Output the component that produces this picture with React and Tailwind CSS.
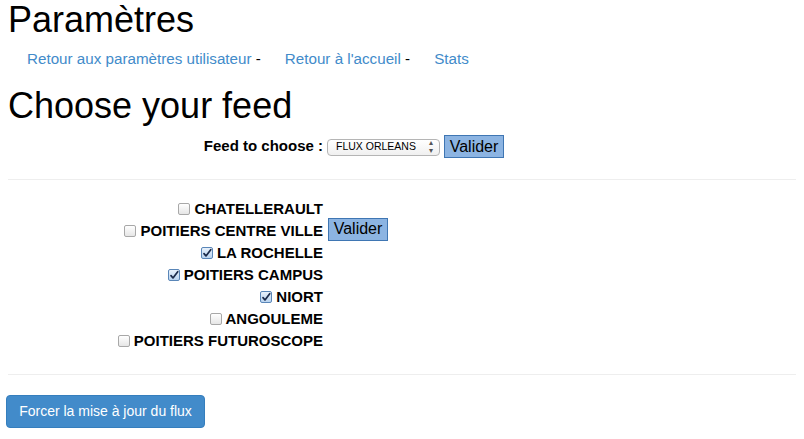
import React, { useState } from "react";

const feeds = [
  { name: "CHATELLERAULT", checked: false },
  { name: "POITIERS CENTRE VILLE", checked: false },
  { name: "LA ROCHELLE", checked: true },
  { name: "POITIERS CAMPUS", checked: true },
  { name: "NIORT", checked: true },
  { name: "ANGOULEME", checked: false },
  { name: "POITIERS FUTUROSCOPE", checked: false },
];

function Box({ checked, onClick }) {
  // small mac-style checkbox
  return (
    <span
      onClick={onClick}
      className={`inline-flex items-center justify-center w-[12px] h-[12px] rounded-[2px] border mr-[4px] ${
        checked
          ? "border-[#5a86b8] bg-gradient-to-b from-[#e8f1fb] to-[#b9d3ef]"
          : "border-[#a8a8a8] bg-gradient-to-b from-white to-[#e6e6e6]"
      }`}
    >
      {checked && (
        <svg viewBox="0 0 11 11" className="w-[11px] h-[11px]">
          <path
            d="M2.2 5.6 L4.4 8.2 L9.6 1.4"
            fill="none"
            stroke="#1b2a4a"
            strokeWidth="1.9"
            strokeLinecap="round"
            strokeLinejoin="round"
          />
        </svg>
      )}
    </span>
  );
}

export default function App() {
  const [list, setList] = useState(feeds);

  const toggle = (i) => {
    setList(list.map((f, j) => (j === i ? { ...f, checked: !f.checked } : f)));
  };

  return (
    <div className="bg-white text-black px-2 min-h-[439px] font-['Liberation_Sans',Arial,sans-serif]">
      <h1 className="text-[36px] leading-[40px]">Paramètres</h1>

      {/* top links */}
      <div className="mt-[9px] flex items-center pl-[19px] text-[15.2px] leading-[20px] whitespace-pre">
        <a href="#" className="text-[#428bca]">
          Retour aux paramètres utilisateur
        </a>
        <span>{" -"}</span>
        <a href="#" className="text-[#428bca] ml-[24px]">
          Retour à l'accueil
        </a>
        <span>{" -"}</span>
        <a href="#" className="text-[#428bca] ml-[24px]">
          Stats
        </a>
      </div>

      <h2 className="mt-[17px] text-[36px] leading-[40px]">Choose your feed</h2>

      {/* feed select */}
      <div className="mt-[9px] flex items-center h-[23px]">
        <label className="w-[315px] text-right font-bold text-[15px] leading-[18px] -mt-[2px]">
          Feed to choose :
        </label>
        <div className="ml-[4px] mt-[1px] w-[113px] h-[17px] rounded-[4px] border border-[#b5b5b5] bg-gradient-to-b from-white to-[#f0f0f0] flex items-center justify-between pl-[8px] pr-[6px] text-[10.5px]">
          <span>FLUX ORLEANS</span>
          <span className="text-[8px] leading-[8px] text-[#555] flex flex-col items-center">
            <span>▴</span>
            <span>▾</span>
          </span>
        </div>
        <button className="ml-[4px] h-[23px] w-[60px] bg-[#8cb4e2] border border-[#3f76b3] text-[16px] leading-[20px]">
          Valider
        </button>
      </div>

      <hr className="mt-[21px] border-0 border-t border-[#eeeeee]" />

      {/* feed list */}
      <div className="mt-[18px] flex">
        <div className="w-[315px] flex flex-col items-end">
          {list.map((f, i) => (
            <div
              key={f.name}
              className="h-[22px] flex items-center font-bold text-[15px]"
            >
              <Box checked={f.checked} onClick={() => toggle(i)} />
              <span>{f.name}</span>
            </div>
          ))}
        </div>
        <div className="ml-[5px] mt-[19px]">
          <button className="h-[23px] w-[60px] bg-[#8cb4e2] border border-[#3f76b3] text-[16px] leading-[20px]">
            Valider
          </button>
        </div>
      </div>

      <hr className="mt-[22px] border-0 border-t border-[#eeeeee]" />

      <button className="mt-[20px] -ml-[2px] h-[33px] w-[199px] rounded-[4px] bg-[#428bca] border border-[#357ebd] text-white text-[14px]">
        Forcer la mise à jour du flux
      </button>
    </div>
  );
}
